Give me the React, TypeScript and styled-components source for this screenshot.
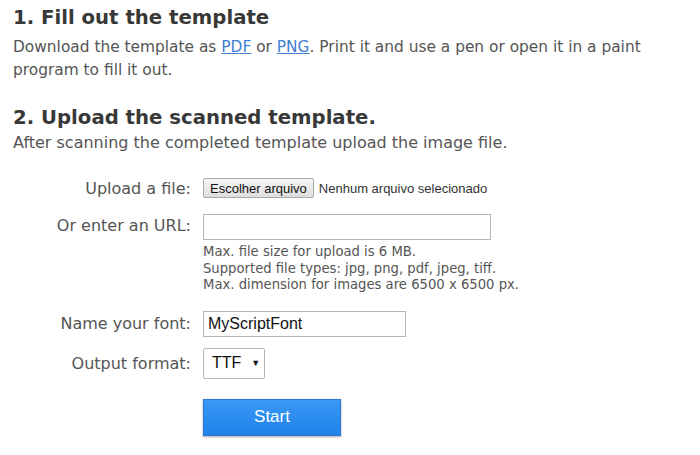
import { FC } from 'react';
import styled, { createGlobalStyle } from 'styled-components';

const GlobalStyle = createGlobalStyle`
  html, body {
    margin: 0;
    padding: 0;
    background: #fff;
  }
  body {
    font-family: 'DejaVu Sans', Verdana, sans-serif;
    color: #555;
  }
`;

const Page = styled.div`
  width: 700px;
  height: 455px;
  padding: 6px 13px 0;
  box-sizing: border-box;
  overflow: hidden;
`;

const Heading = styled.h2`
  margin: 0;
  font-size: 19.7px;
  line-height: 24px;
  font-weight: 700;
  color: #383838;
`;

const Paragraph = styled.p<{ $top: number; $gap?: number; $size: number }>`
  margin: ${({ $top }) => $top}px 0 ${({ $gap }) => $gap ?? 0}px;
  font-size: ${({ $size }) => $size}px;
  line-height: 23px;
  color: #555;
`;

const Link = styled.a`
  color: #3f7fd4;
  text-decoration: underline;
`;

const Form = styled.form`
  display: grid;
  grid-template-columns: 178px 1fr;
  column-gap: 12px;
  align-items: center;
  margin-top: 24px;
`;

const Label = styled.label<{ $top?: boolean }>`
  justify-self: end;
  align-self: ${({ $top }) => ($top ? 'start' : 'center')};
  margin-top: ${({ $top }) => ($top ? 2 : 0)}px;
  font-size: 16px;
  color: #555;
`;

const Field = styled.div`
  display: flex;
  flex-direction: column;
  align-items: flex-start;
`;

const FileButton = styled.button`
  height: 20px;
  padding: 0 6px;
  font-family: 'Liberation Sans', Arial, sans-serif;
  font-size: 13px;
  color: #111;
  background: linear-gradient(#f6f6f6, #dedede);
  border: 1px solid #a9a9a9;
  border-radius: 2px;
`;

const FileRow = styled.div`
  display: flex;
  align-items: center;
  gap: 5px;
  font-family: 'Liberation Sans', Arial, sans-serif;
  font-size: 13px;
  color: #333;
`;

const TextInput = styled.input<{ $width: number }>`
  width: ${({ $width }) => $width}px;
  height: 26px;
  box-sizing: border-box;
  border: 1px solid #b5b5b5;
  padding: 0 4px;
  font-family: 'Liberation Sans', Arial, sans-serif;
  font-size: 16px;
  color: #111;
  outline: none;
`;

const Help = styled.div`
  margin-top: 4px;
  font-size: 13.2px;
  line-height: 16.5px;
  color: #555;
`;

const Select = styled.div`
  display: flex;
  align-items: center;
  gap: 10px;
  width: 62px;
  height: 31px;
  box-sizing: border-box;
  padding: 0 8px;
  border: 1px solid #b5b5b5;
  border-radius: 2px;
  font-family: 'Liberation Sans', Arial, sans-serif;
  font-size: 16px;
  color: #111;
`;

const Caret = styled.span`
  font-size: 9px;
`;

const StartButton = styled.button`
  width: 138px;
  height: 37px;
  border: 1px solid #2a78d0;
  background: linear-gradient(#3a98f5, #1f82ea);
  color: #fff;
  font-family: 'Liberation Sans', Arial, sans-serif;
  font-size: 17px;
  box-shadow: 0 1px 2px rgba(0, 0, 0, 0.35);
`;

const Spacer = styled.div<{ $h: number }>`
  grid-column: 1 / -1;
  height: ${({ $h }) => $h}px;
`;

const App: FC = () => {
  return (
    <>
      <GlobalStyle />
      <Page>
        <Heading>1. Fill out the template</Heading>
        <Paragraph $top={6} $size={15.4} $gap={24}>
          Download the template as <Link href="#">PDF</Link> or{' '}
          <Link href="#">PNG</Link>. Print it and use a pen or open it in a
          paint program to fill it out.
        </Paragraph>
        <Heading>2. Upload the scanned template.</Heading>
        <Paragraph $top={1} $size={16}>
          After scanning the completed template upload the image file.
        </Paragraph>
        <Form onSubmit={(e) => e.preventDefault()}>
          <Label>Upload a file:</Label>
          <FileRow>
            <FileButton type="button">Escolher arquivo</FileButton>
            <span>Nenhum arquivo selecionado</span>
          </FileRow>
          <Spacer $h={16} />
          <Label $top>Or enter an URL:</Label>
          <Field>
            <TextInput $width={288} />
            <Help>
              Max. file size for upload is 6 MB.
              <br />
              Supported file types: jpg, png, pdf, jpeg, tiff.
              <br />
              Max. dimension for images are 6500 x 6500 px.
            </Help>
          </Field>
          <Spacer $h={17} />
          <Label>Name your font:</Label>
          <Field>
            <TextInput $width={203} defaultValue="MyScriptFont" />
          </Field>
          <Spacer $h={11} />
          <Label>Output format:</Label>
          <Field>
            <Select>
              TTF <Caret>▼</Caret>
            </Select>
          </Field>
          <Spacer $h={20} />
          <span />
          <Field>
            <StartButton type="submit">Start</StartButton>
          </Field>
        </Form>
      </Page>
    </>
  );
};

export default App;
